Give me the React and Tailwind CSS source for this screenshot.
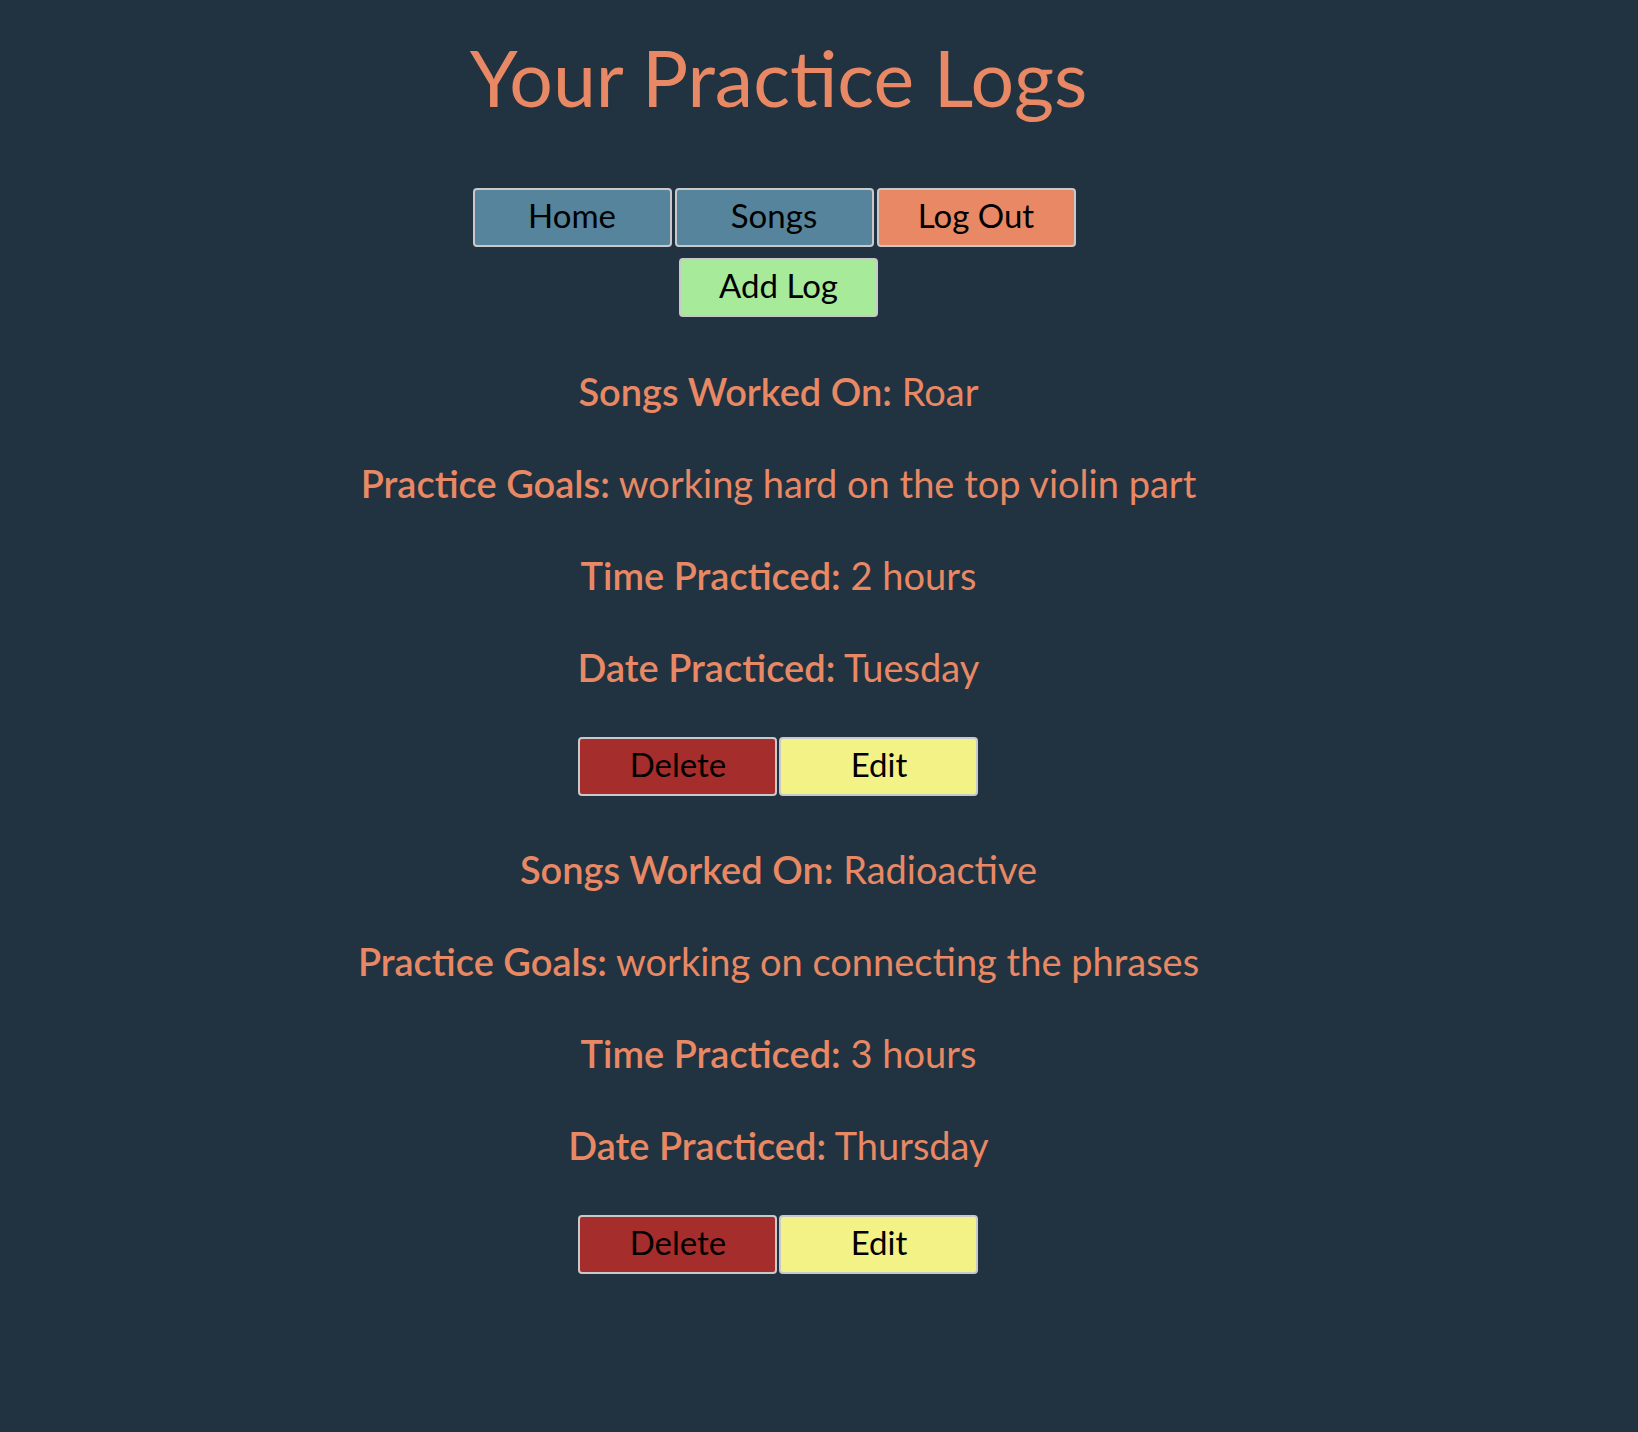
import React from "react";

const logs = [
  { song: "Roar", goals: "working hard on the top violin part", time: "2 hours", date: "Tuesday" },
  { song: "Radioactive", goals: "working on connecting the phrases", time: "3 hours", date: "Thursday" },
];

function Btn({ children, color }) {
  return (
    <button
      className={`w-[199px] h-[59px] border-2 border-[#c9c9c9] rounded-[4px] text-black text-[33px] leading-none pb-[5px] flex items-center justify-center ${color}`}
    >
      {children}
    </button>
  );
}

function Line({ label, value }) {
  return (
    <p className="text-[38px] leading-[52px] h-[52px] text-[#e88864] whitespace-nowrap">
      <span className="font-semibold">{label}:</span> {value}
    </p>
  );
}

export default function App() {
  return (
    <div className="min-h-screen bg-[#213340] pb-[100px]" style={{ fontFamily: 'Lato, "Open Sans", sans-serif' }}>
      <div className="w-[1557px] flex flex-col items-center">
        <h1 className="mt-[31px] text-[77px] leading-[92px] h-[92px] text-[#e88864] whitespace-nowrap">
          Your Practice Logs
        </h1>
        <div className="mt-[65px] flex gap-[3px] pr-[9px]">
          <Btn color="bg-[#56849c]">Home</Btn>
          <Btn color="bg-[#56849c]">Songs</Btn>
          <Btn color="bg-[#e88864]">Log Out</Btn>
        </div>
        <div className="mt-[11px] flex">
          <Btn color="bg-[#a7ea99]">Add Log</Btn>
        </div>
        <div className="mt-[48px] flex flex-col gap-[47px]">
          {logs.map((l) => (
            <div key={l.song} className="flex flex-col items-center">
              <div className="flex flex-col items-center gap-[40px]">
                <Line label="Songs Worked On" value={l.song} />
                <Line label="Practice Goals" value={l.goals} />
                <Line label="Time Practiced" value={l.time} />
                <Line label="Date Practiced" value={l.date} />
              </div>
              <div className="mt-[44px] flex gap-[2px]">
                <Btn color="bg-[#a52d2b]">Delete</Btn>
                <Btn color="bg-[#f3f286]">Edit</Btn>
              </div>
            </div>
          ))}
        </div>
      </div>
    </div>
  );
}
